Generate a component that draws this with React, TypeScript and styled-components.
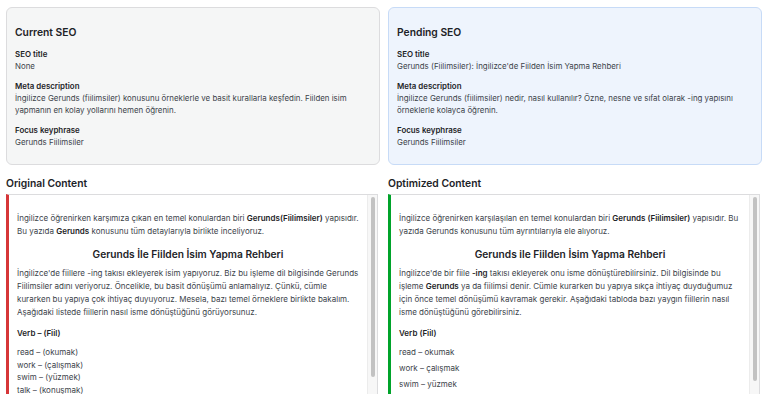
import React from 'react'
import styled, { createGlobalStyle } from 'styled-components'

const GlobalStyle = createGlobalStyle`
    html, body {
        margin: 0;
        padding: 0;
        overflow: hidden;
        background: #ffffff;
        font-family: Inter, "Liberation Sans", Arial, sans-serif;
        color: #3c434a;
    }
    * {
        box-sizing: border-box;
    }
`

const Page = styled.div`
    display: grid;
    grid-template-columns: 1fr 1fr;
    column-gap: 8px;
    padding: 7px 6px 0;
    height: 394px;
    overflow: hidden;
`

const Card = styled.div<{ pending?: boolean }>`
    border: 1px solid ${props => props.pending ? "#c7dbf7" : "#dcdcde"};
    background-color: ${props => props.pending ? "#eef4fd" : "#f5f6f6"};
    border-radius: 6px;
    padding: 17px 8px 16px;
`

const CardTitle = styled.h3`
    margin: 0 0 9px;
    font-size: 10.3px;
    line-height: 14px;
    font-weight: 600;
    color: #1d2327;
`

const Field = styled.div`
    margin-bottom: 8px;
    &:last-child {
        margin-bottom: 0;
    }
`

const Label = styled.div`
    font-size: 7.9px;
    line-height: 12px;
    font-weight: 600;
    color: #1d2327;
`

const Value = styled.div`
    font-size: 7.9px;
    line-height: 12px;
    color: #3c434a;
`

const Section = styled.div`
    margin-top: 11px;
    min-width: 0;
`

const SectionTitle = styled.h3`
    margin: 0 0 4px;
    font-size: 10.3px;
    line-height: 14px;
    font-weight: 600;
    color: #1d2327;
`

const ContentBox = styled.div<{ accent: string }>`
    display: flex;
    height: 206px;
    margin-right: 2px;
    overflow: hidden;
    background: #ffffff;
    border: 1px solid #dcdcde;
    border-left: 3px solid ${props => props.accent};
`

const ScrollArea = styled.div`
    flex: 1;
    min-width: 0;
    padding: 17px 8px 10px 8px;
    font-size: 8px;
    line-height: 13px;
    color: #3c434a;
`

const ScrollTrack = styled.div`
    flex: none;
    width: 10px;
    padding: 2px 2px 0 3px;
    background: #f7f7f7;
    border-left: 1px solid #ececec;
`

const ScrollThumb = styled.div<{ size: number }>`
    height: ${props => props.size}px;
    border-radius: 4px;
    background: #c2c2c2;
`

const Paragraph = styled.p`
    margin: 0 0 8px;
`

const Heading = styled.h2`
    margin: 0 0 5px;
    text-align: center;
    font-size: 10.2px;
    line-height: 16px;
    font-weight: 600;
    color: #1d2327;
`

const Strong = styled.strong`
    font-weight: 600;
    color: #1d2327;
`

const VerbTitle = styled.p`
    margin: 0 0 6px;
    font-weight: 600;
    color: #1d2327;
`

const ListLine = styled.p<{ spacing: number; lineHeight: number }>`
    margin: 0 0 ${props => props.spacing}px;
    line-height: ${props => props.lineHeight}px;
`

interface SeoField {
    label: string;
    value: string;
}

const currentSeo: SeoField[] = [
    { label: "SEO title", value: "None" },
    { label: "Meta description", value: "İngilizce Gerunds (fiilimsiler) konusunu örneklerle ve basit kurallarla keşfedin. Fiilden isim yapmanın en kolay yollarını hemen öğrenin." },
    { label: "Focus keyphrase", value: "Gerunds Fiilimsiler" },
]

const pendingSeo: SeoField[] = [
    { label: "SEO title", value: "Gerunds (Fiilimsiler): İngilizce'de Fiilden İsim Yapma Rehberi" },
    { label: "Meta description", value: "İngilizce Gerunds (fiilimsiler) nedir, nasıl kullanılır? Özne, nesne ve sıfat olarak -ing yapısını örneklerle kolayca öğrenin." },
    { label: "Focus keyphrase", value: "Gerunds Fiilimsiler" },
]

const SeoCard: React.FunctionComponent<{ title: string; fields: SeoField[]; pending?: boolean }> = ({ title, fields, pending }) => {
    return (
        <Card pending={pending}>
            <CardTitle>{title}</CardTitle>
            {fields.map(f => (
                <Field key={f.label}>
                    <Label>{f.label}</Label>
                    <Value>{f.value}</Value>
                </Field>
            ))}
        </Card>
    )
}

const originalVerbs = ["read – (okumak)", "work – (çalışmak)", "swim – (yüzmek)", "talk – (konuşmak)"]
const optimizedVerbs = ["read – okumak", "work – çalışmak", "swim – yüzmek"]

const App: React.FunctionComponent = () => {
    return (
        <>
            <GlobalStyle />
            <Page>
                <SeoCard title="Current SEO" fields={currentSeo} />
                <SeoCard title="Pending SEO" fields={pendingSeo} pending />

                <Section>
                    <SectionTitle>Original Content</SectionTitle>
                    <ContentBox accent="#d63638">
                        <ScrollArea>
                            <Paragraph>
                                İngilizce öğrenirken karşımıza çıkan en temel konulardan biri <Strong>Gerunds(Fiilimsiler)</Strong> yapısıdır. Bu yazıda <Strong>Gerunds</Strong> konusunu tüm detaylarıyla birlikte inceliyoruz.
                            </Paragraph>
                            <Heading>Gerunds İle Fiilden İsim Yapma Rehberi</Heading>
                            <Paragraph>
                                İngilizce'de fiillere -ing takısı ekleyerek isim yapıyoruz. Biz bu işleme dil bilgisinde Gerunds Fiilimsiler adını veriyoruz. Öncelikle, bu basit dönüşümü anlamalıyız. Çünkü, cümle kurarken bu yapıya çok ihtiyaç duyuyoruz. Mesela, bazı temel örneklere birlikte bakalım. Aşağıdaki listede fiillerin nasıl isme dönüştüğünü görüyorsunuz.
                            </Paragraph>
                            <VerbTitle>Verb – (Fiil)</VerbTitle>
                            {originalVerbs.map(v => (
                                <ListLine key={v} spacing={0} lineHeight={12.6}>{v}</ListLine>
                            ))}
                        </ScrollArea>
                        <ScrollTrack>
                            <ScrollThumb size={180} />
                        </ScrollTrack>
                    </ContentBox>
                </Section>

                <Section>
                    <SectionTitle>Optimized Content</SectionTitle>
                    <ContentBox accent="#00a32a">
                        <ScrollArea>
                            <Paragraph>
                                İngilizce öğrenirken karşılaşılan en temel konulardan biri <Strong>Gerunds (Fiilimsiler)</Strong> yapısıdır. Bu yazıda Gerunds konusunu tüm ayrıntılarıyla ele alıyoruz.
                            </Paragraph>
                            <Heading>Gerunds ile Fiilden İsim Yapma Rehberi</Heading>
                            <Paragraph>
                                İngilizce'de bir fiile <Strong>-ing</Strong> takısı ekleyerek onu isme dönüştürebilirsiniz. Dil bilgisinde bu işleme <Strong>Gerunds</Strong> ya da fiilimsi denir. Cümle kurarken bu yapıya sıkça ihtiyaç duyduğumuz için önce temel dönüşümü kavramak gerekir. Aşağıdaki tabloda bazı yaygın fiillerin nasıl isme dönüştüğünü görebilirsiniz.
                            </Paragraph>
                            <VerbTitle>Verb (Fiil)</VerbTitle>
                            {optimizedVerbs.map(v => (
                                <ListLine key={v} spacing={3} lineHeight={13}>{v}</ListLine>
                            ))}
                        </ScrollArea>
                        <ScrollTrack>
                            <ScrollThumb size={184} />
                        </ScrollTrack>
                    </ContentBox>
                </Section>
            </Page>
        </>
    )
}

export default App
